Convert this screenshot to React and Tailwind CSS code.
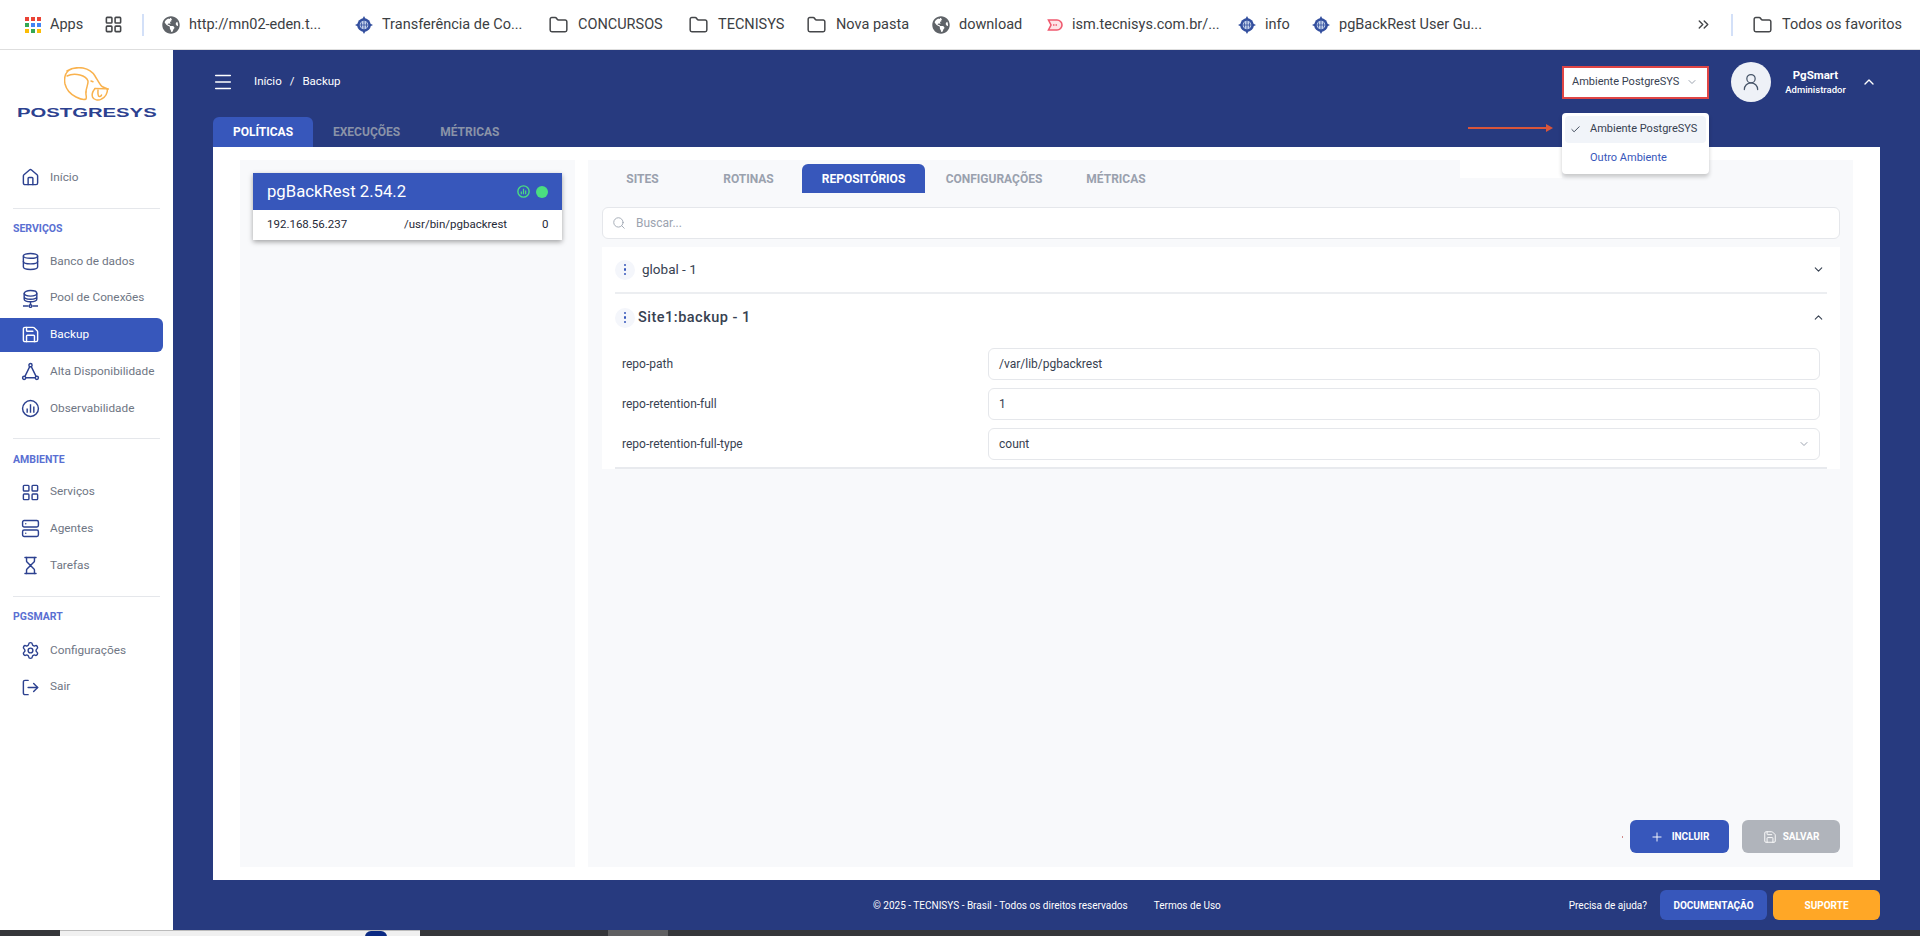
import { ChevronDown, ChevronUp, ChevronsRight, Check, Database, Folder, Hourglass, House, LayoutGrid, LogOut, Menu, Plus, Save, Search, Server, Settings, UserRound } from "lucide-react";
import { FaGlobeAmericas } from "react-icons/fa";

const Divider = () => <div className="mx-[13px] h-[2px] bg-[#e8eaee]" />;

const PoolIcon = ({ className }) => (
  <svg viewBox="0 0 24 24" fill="none" stroke="currentColor" strokeWidth="1.8" className={className}>
    <ellipse cx="12" cy="5.5" rx="8" ry="3.5" />
    <path d="M4 5.5v7c0 2 3.6 3.5 8 3.5s8-1.500 8-3.500v-7M4 9.500c0 2 3.600 3.500 8 3.500s8-1.500 8-3.500" />
    <path d="M12 16v4M2.500 21.500h7M14.500 21.500h7" />
    <circle cx="12" cy="21.500" r="1.700" />
  </svg>
);

const TriangleIcon = ({ className }) => (
  <svg viewBox="0 0 24 24" fill="none" stroke="currentColor" strokeWidth="1.8" className={className}>
    <circle cx="12" cy="4" r="2" />
    <circle cx="4" cy="20" r="2" />
    <circle cx="20" cy="20" r="2" />
    <path d="M11 5.800 5 18.200M13 5.800l6 12.400M6 20h12" />
  </svg>
);

const ChartIcon = ({ className }) => (
  <svg viewBox="0 0 24 24" fill="none" stroke="currentColor" strokeWidth="1.8" className={className}>
    <circle cx="12" cy="12" r="10" />
    <path d="M12 6.500v11M7.800 12v5.500M16.200 9.500v8" />
  </svg>
);

const SiteIcon = ({ className }) => (
  <svg viewBox="0 0 18 18" className={className}>
    <path d="M9 0l1.600 3h-3.200zM9 18l1.600-3h-3.200zM0 9l3-1.600v3.200zM18 9l-3-1.600v3.200z" fill="#34509f" />
    <circle cx="9" cy="9" r="6.800" fill="#34509f" />
    <circle cx="9" cy="9" r="4.300" fill="#c3d1ea" />
    <path d="M4.700 9h8.600M9 4.700v8.600M6.500 6.500v5M11.500 6.500v5" stroke="#34509f" strokeWidth="0.800" />
  </svg>
);

const Elephant = () => (
  <svg viewBox="0 0 45 36" fill="none" stroke="#f9b24e" strokeWidth="1.500" strokeLinecap="round" className="h-[36px] w-[45px]">
    <path d="M3 4C7 1.500 13 0 19 1c5 1 9 3 12 8 2.500 4 5 9 7 10.500 2 1.200 4 1.800 6 2.500" />
    <path d="M4 4C1 7 0 12 1 17c1.500 6 6 10.500 11 13 4 2 8 3 10 2 1-2-.5-4 0-7" />
    <path d="M3 9c4-2 9-2 13-1 4 1 7 3 8 6 .5 3-2 7-2 11" />
    <path d="M31 21.500c-2 2.500-3.500 6-2.500 8.500 1 3 6 4 9 2 4-2 6-6 6-10" />
    <path d="M31 21.500c4 0 9 0 13 .5" />
    <path d="M34 23c0 2-.5 4 .5 6 1 1 3 0 3-1" />
    <path d="M27 14l2 .8" />
  </svg>
);

const Bookmark = ({ icon, label, className }) => (
  <div className={`flex shrink-0 items-center gap-[9px] ${className}`}>
    {icon}
    <span className="whitespace-nowrap">{label}</span>
  </div>
);

const globe = <FaGlobeAmericas className="h-[18px] w-[18px] text-[#5f6368]" />;
const folder = <Folder strokeWidth={1.8} className="h-[20px] w-[21px] text-[#45474a]" />;
const site = <SiteIcon className="h-[18px] w-[18px]" />;

const appColors = ["#ea4335", "#ea4335", "#ea4335", "#34a853", "#4285f4", "#4285f4", "#fbbc05", "#34a853", "#fbbc05"];

const BookmarkBar = () => (
  <div className="flex h-[50px] shrink-0 items-center border-b border-[#dedede] bg-white pl-[25px] font-['Roboto',sans-serif] text-[14.5px] text-[#3c4043]">
    <Bookmark
      className="w-[79px]"
      label="Apps"
      icon={
        <div className="grid h-[16px] w-[16px] grid-cols-3 gap-[2px]">
          {appColors.map((c, i) => (
            <span key={i} style={{ backgroundColor: c }} />
          ))}
        </div>
      }
    />
    <div className="w-[38px]">
      <LayoutGrid className="h-[19px] w-[19px] text-[#45474a]" strokeWidth={2} />
    </div>
    <div className="h-[22px] w-[2px] bg-[#d3e0f8]" />
    <div className="w-[18px]" />
    <Bookmark className="w-[193px]" icon={globe} label="http://mn02-eden.t..." />
    <Bookmark className="w-[193px]" icon={site} label="Transferência de Co..." />
    <Bookmark className="w-[140px]" icon={folder} label="CONCURSOS" />
    <Bookmark className="w-[118px]" icon={folder} label="TECNISYS" />
    <Bookmark className="w-[126px]" icon={folder} label="Nova pasta" />
    <Bookmark className="w-[115px]" icon={globe} label="download" />
    <Bookmark
      className="w-[191px]"
      label="ism.tecnisys.com.br/..."
      icon={
        <svg viewBox="0 0 16 14" className="h-[14px] w-[16px]" fill="#fde3e6" stroke="#ef5a6f" strokeWidth="1.600">
          <path d="M1.500 2H10a5 5 0 0 1 0 10H1.500L4 7z" />
          <path d="M6 7h5" strokeDasharray="1.500 1" />
        </svg>
      }
    />
    <Bookmark className="w-[74px]" icon={site} label="info" />
    <Bookmark className="w-[383px]" icon={site} label="pgBackRest User Gu..." />
    <div className="w-[36px]">
      <ChevronsRight className="h-[17px] w-[17px] text-[#45474a]" />
    </div>
    <div className="h-[22px] w-[2px] bg-[#d3e0f8]" />
    <div className="w-[19px]" />
    <Bookmark className="" icon={folder} label="Todos os favoritos" />
  </div>
);

const NavItem = ({ icon: Icon, label, active }) => (
  <div className="flex h-[36.75px] items-center">
    <div
      className={`flex h-[34px] w-[163px] items-center gap-[10px] rounded-r-md pl-[21px] text-[11.8px] ${
        active ? "bg-[#3757bb] text-white" : "text-[#6f7684]"
      }`}
    >
      <Icon className={`h-[19px] w-[19px] shrink-0 ${active ? "text-white" : "text-[#2c4190]"}`} strokeWidth={1.8} />
      <span className="whitespace-nowrap">{label}</span>
    </div>
  </div>
);

const SectionLabel = ({ children, className }) => (
  <div className={`flex h-[18px] items-center pl-[13px] text-[10.5px] font-bold text-[#5a6fd2] ${className}`}>{children}</div>
);

const Sidebar = () => (
  <aside className="flex w-[173px] shrink-0 flex-col bg-white font-['Roboto',sans-serif]">
    <div className="flex h-[109px] flex-col items-center pt-[17px]">
      <Elephant />
      <div className="mt-[2px] scale-x-[1.56] font-['Liberation_Sans',sans-serif] text-[13px] font-bold leading-[16px] text-[#2c4190]">
        POSTGRESYS
      </div>
    </div>
    <div className="flex h-[37px] items-center gap-[10px] pl-[21px] text-[11.8px] text-[#6f7684]">
      <House className="h-[19px] w-[19px] text-[#2c4190]" strokeWidth={1.8} />
      Início
    </div>
    <div className="ml-[13px] mt-[12px] h-px w-[147px] bg-[#e5e7eb]" />
    <SectionLabel className="mt-[11px]">SERVIÇOS</SectionLabel>
    <div className="mt-[5px]">
      <NavItem icon={Database} label="Banco de dados" />
      <NavItem icon={PoolIcon} label="Pool de Conexões" />
      <NavItem icon={Save} label="Backup" active />
      <NavItem icon={TriangleIcon} label="Alta Disponibilidade" />
      <NavItem icon={ChartIcon} label="Observabilidade" />
    </div>
    <div className="ml-[13px] mt-[11px] h-px w-[147px] bg-[#e5e7eb]" />
    <SectionLabel className="mt-[12px]">AMBIENTE</SectionLabel>
    <div className="mt-[5px]">
      <NavItem icon={LayoutGrid} label="Serviços" />
      <NavItem icon={Server} label="Agentes" />
      <NavItem icon={Hourglass} label="Tarefas" />
    </div>
    <div className="ml-[13px] mt-[12px] h-px w-[147px] bg-[#e5e7eb]" />
    <SectionLabel className="mt-[11px]">PGSMART</SectionLabel>
    <div className="mt-[6px]">
      <NavItem icon={Settings} label="Configurações" />
      <NavItem icon={LogOut} label="Sair" />
    </div>
  </aside>
);

const EnvSelect = () => (
  <div className="relative z-10">
    <div className="flex h-[33px] w-[147px] items-center border-2 border-[#e04545] bg-white pl-[8px] text-[11px] text-[#374151]">
      <span className="whitespace-nowrap">Ambiente PostgreSYS</span>
      <ChevronDown className="ml-[7px] h-[12px] w-[12px] text-[#9ca3af]" />
    </div>
    <div className="absolute left-[-102px] top-[82px] h-[30px] w-[102px] bg-white" />
    <div className="absolute left-[-94px] top-[58px] flex items-center">
      <div className="h-[2px] w-[78px] bg-[#d9553a]" />
      <div className="h-0 w-0 border-y-[4px] border-l-[7px] border-y-transparent border-l-[#d9553a]" />
    </div>
    <div className="absolute left-0 top-[47px] h-[61px] w-[147px] rounded-sm bg-white px-[3px] pt-[3px] text-[11px] shadow-[0_3px_4px_rgba(0,0,0,0.2)]">
      <div className="flex h-[27px] items-center rounded-sm bg-[#f1f4f9] pl-[5px] text-[#374151]">
        <Check className="h-[11px] w-[11px]" />
        <span className="ml-[9px] whitespace-nowrap">Ambiente PostgreSYS</span>
      </div>
      <div className="ml-[25px] mt-[7px] whitespace-nowrap text-[#3757bb]">Outro Ambiente</div>
    </div>
  </div>
);

const Header = () => (
  <div className="flex h-[67px] shrink-0 items-center pb-[3px] pr-[3px] text-white">
    <Menu className="h-[22px] w-[22px] -translate-x-[1px]" strokeWidth={1.6} />
    <div className="ml-[19px] flex gap-[8px] text-[11.5px]">
      <span>Início</span>
      <span>/</span>
      <span>Backup</span>
    </div>
    <div className="ml-auto">
      <EnvSelect />
    </div>
    <div className="ml-[22px] flex h-[40px] w-[40px] items-center justify-center rounded-full bg-[#eef1f7]">
      <UserRound className="h-[20px] w-[20px] text-[#475569]" strokeWidth={1.5} />
    </div>
    <div className="ml-[13px] flex w-[63px] flex-col items-center">
      <span className="text-[11.5px] font-bold leading-[16px]">PgSmart</span>
      <span className="whitespace-nowrap text-[9.5px] font-medium leading-[14px]">Administrador</span>
    </div>
    <ChevronUp className="ml-[14px] h-[16px] w-[16px]" />
  </div>
);

const MainTabs = () => (
  <div className="flex h-[30px] shrink-0 text-[12px] font-bold">
    <div className="flex w-[100px] items-center justify-center rounded-t-md bg-[#3757bb] text-white">POLÍTICAS</div>
    <div className="ml-[20px] flex items-center text-[#8a93a8]">EXECUÇÕES</div>
    <div className="ml-[40px] flex items-center text-[#8a93a8]">MÉTRICAS</div>
  </div>
);

const ServerCard = () => (
  <div className="shadow-[0_2px_5px_rgba(0,0,0,0.35)]">
    <div className="flex h-[37px] items-center bg-[#3757bb] pl-[14px] pr-[14px] text-[16.7px] text-white">
      <span>pgBackRest 2.54.2</span>
      <svg viewBox="0 0 12 12" fill="none" stroke="#4ade80" className="ml-auto h-[13px] w-[13px]">
        <circle cx="6" cy="6" r="5.200" strokeWidth="1.300" />
        <path d="M4 8.500V6M6 8.500V3.500M8 8.500V5" strokeWidth="1.100" />
      </svg>
      <span className="ml-[6px] h-[12px] w-[12px] rounded-full bg-[#4ade80]" />
    </div>
    <div className="flex h-[30px] items-center bg-white pl-[14px] text-[11.5px] text-[#1f2937]">
      <span className="w-[137px]">192.168.56.237</span>
      <span className="w-[138px]">/usr/bin/pgbackrest</span>
      <span>0</span>
    </div>
  </div>
);

const repoTabs = [
  { label: "SITES", w: "w-[105px]" },
  { label: "ROTINAS", w: "w-[107px]" },
  { label: "REPOSITÓRIOS", w: "w-[123px]", active: true },
  { label: "CONFIGURAÇÕES", w: "w-[138px]" },
  { label: "MÉTRICAS", w: "w-[106px]" },
];

const Kebab = () => (
  <div className="flex h-[20px] w-[20px] flex-col items-center justify-center gap-[2px] rounded-full bg-[#f4f6fb]">
    <span className="h-[2.500px] w-[2.500px] rounded-full bg-[#3757bb]" />
    <span className="h-[2.500px] w-[2.500px] rounded-full bg-[#3757bb]" />
    <span className="h-[2.500px] w-[2.500px] rounded-full bg-[#3757bb]" />
  </div>
);

const Field = ({ label, value, select }) => (
  <div className="flex items-center pl-[7px] pr-[7px] text-[12px] text-[#374151]">
    <span className="w-[366px] shrink-0">{label}</span>
    <div className="flex h-[32px] flex-1 items-center rounded-md border border-[#e5e7eb] bg-white pl-[10px] pr-[9px]">
      <span>{value}</span>
      {select && <ChevronDown className="ml-auto h-[12px] w-[12px] text-[#9ca3af]" />}
    </div>
  </div>
);

const RepoPanel = () => (
  <div className="flex flex-1 flex-col bg-[#f8f9fb] pb-[14px] pl-[14px] pr-[13px] pt-[4px]">
    <div className="-ml-[12px] flex h-[29px] shrink-0 text-[12px] font-bold">
      {repoTabs.map((t) => (
        <div
          key={t.label}
          className={`flex items-center justify-center ${t.w} ${t.active ? "rounded-t-md bg-[#3757bb] text-white" : "text-[#9aa1ae]"}`}
        >
          {t.label}
        </div>
      ))}
    </div>
    <div className="mt-[14px] flex h-[32px] shrink-0 items-center rounded-md border border-[#e5e7eb] bg-white pl-[9px] text-[12px] text-[#9ca3af]">
      <Search className="h-[14px] w-[14px]" strokeWidth={1.5} />
      <span className="ml-[10px]">Buscar...</span>
    </div>
    <div className="mt-[8px] bg-white">
      <div className="mx-[13px] flex h-[47px] items-center border-b-2 border-[#eceef1] pr-[2px] text-[13.5px] text-[#374151]">
        <Kebab />
        <span className="ml-[7px]">global - 1</span>
        <ChevronDown className="ml-auto h-[13px] w-[13px]" />
      </div>
      <div className="mx-[13px] flex h-[47px] items-center pr-[2px] text-[#374151]">
        <Kebab />
        <span className="ml-[3px] text-[14.5px] font-medium tracking-[0.5px]">Site1:backup - 1</span>
        <ChevronUp className="ml-auto h-[13px] w-[13px]" />
      </div>
      <div className="mx-[13px] mt-[7px] flex flex-col gap-[8px]">
        <Field label="repo-path" value="/var/lib/pgbackrest" />
        <Field label="repo-retention-full" value="1" />
        <Field label="repo-retention-full-type" value="count" select />
      </div>
      <div className="mt-[7px]">
        <Divider />
      </div>
    </div>
    <div className="mt-auto flex items-center justify-end text-[10px] font-bold text-white">
      <span className="mr-[7px] h-[2px] w-px bg-[#d08a8a]" />
      <div className="flex h-[33px] w-[99px] items-center justify-center gap-[8px] rounded-md bg-[#3757bb]">
        <Plus className="h-[14px] w-[14px]" strokeWidth={1.6} />
        INCLUIR
      </div>
      <div className="ml-[13px] flex h-[33px] w-[98px] items-center justify-center gap-[6px] rounded-md bg-[#b0b4bb]">
        <Save className="h-[14px] w-[14px]" strokeWidth={1.6} />
        SALVAR
      </div>
    </div>
  </div>
);

const Footer = () => (
  <div className="flex h-[50px] shrink-0 items-center pl-[660px] text-[10px] text-white">
    <span className="whitespace-nowrap">© 2025 - TECNISYS - Brasil - Todos os direitos reservados</span>
    <span className="ml-[26px] whitespace-nowrap">Termos de Uso</span>
    <span className="ml-auto whitespace-nowrap">Precisa de ajuda?</span>
    <div className="ml-[13px] flex h-[30px] w-[107px] items-center justify-center rounded-md bg-[#3757bb] font-bold">DOCUMENTAÇÃO</div>
    <div className="ml-[6px] flex h-[30px] w-[107px] items-center justify-center rounded-md bg-[#ffa726] font-bold">SUPORTE</div>
  </div>
);

const TaskStrip = () => (
  <div className="flex h-[6px] shrink-0 bg-[#35363a]">
    <div className="ml-[60px] flex w-[360px] justify-end overflow-hidden border-t border-[#bbbbbb] bg-[#f0f0f0]">
      <span className="mr-[33px] h-[12px] w-[22px] rounded-full bg-[#0b2a83]" />
    </div>
    <div className="ml-[188px] w-[60px] bg-[#5f5f61]" />
  </div>
);

export default function App() {
  return (
    <div className="flex h-[936px] w-[1920px] flex-col overflow-hidden">
      <BookmarkBar />
      <div className="flex min-h-0 flex-1">
        <Sidebar />
        <main className="flex flex-1 flex-col bg-[#273a7f] pl-[40px] pr-[40px] font-['Roboto',sans-serif]">
          <Header />
          <MainTabs />
          <div className="flex min-h-0 flex-1 gap-[13px] bg-white px-[27px] py-[13px]">
            <div className="w-[335px] shrink-0 bg-[#f8f9fb] px-[13px] pt-[13px]">
              <ServerCard />
            </div>
            <RepoPanel />
          </div>
          <Footer />
        </main>
      </div>
      <TaskStrip />
    </div>
  );
}
